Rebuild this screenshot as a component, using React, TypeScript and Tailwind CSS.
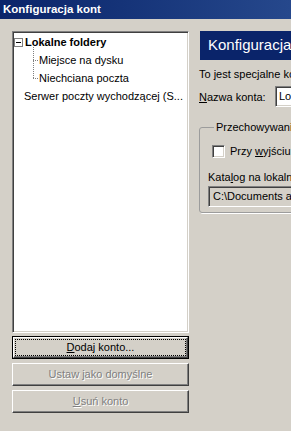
import React from "react";

const sunken =
  "border border-t-[#808080] border-l-[#808080] border-r-white border-b-white shadow-[inset_1px_1px_0_#404040,inset_-1px_-1px_0_#d4d0c8]";
const raised =
  "border border-t-white border-l-white border-r-[#404040] border-b-[#404040] shadow-[inset_-1px_-1px_0_#808080]";

function Connector({ last }: { last?: boolean }) {
  return (
    <svg width="7" height="18" className="overflow-visible shrink-0" viewBox="0 0 7 18">
      <line
        x1="1.5"
        y1={last ? -18 : -4}
        x2="1.5"
        y2={last ? 9 : 18}
        stroke="#808080"
        strokeWidth="1"
        strokeDasharray="1 1"
      />
      <line x1="1" y1="9.5" x2="7" y2="9.5" stroke="#808080" strokeWidth="1" strokeDasharray="1 1" />
    </svg>
  );
}

export default function App() {
  return (
    <div className="w-[291px] h-[431px] overflow-hidden bg-[#d4d0c8] font-['Liberation_Sans',Arial,sans-serif] text-[11px] text-black flex flex-col">
      <div className="h-[19px] shrink-0 bg-gradient-to-r from-[#0a246a] to-[#26488c] flex items-center pl-[3px] text-white font-bold text-[11.5px] leading-none whitespace-nowrap">
        Konfiguracja kont
      </div>
      <div className="flex pt-[12px] pl-[12px] gap-[10px]">
        <div className="w-[177px] shrink-0 flex flex-col">
          <div className={`h-[302px] bg-white ${sunken} pt-[1px]`}>
            <div className="h-[18px] flex items-center pl-[1px] whitespace-nowrap">
              <div className="w-[9px] h-[9px] border border-[#808080] bg-white flex items-center justify-center shrink-0">
                <div className="w-[5px] h-[1px] bg-black" />
              </div>
              <span className="ml-[2px] font-bold">Lokalne foldery</span>
            </div>
            <div className="h-[18px] flex items-center pl-[19px] whitespace-nowrap">
              <Connector />
              <span className="ml-[0px]">Miejsce na dysku</span>
            </div>
            <div className="h-[18px] flex items-center pl-[19px] whitespace-nowrap">
              <Connector last />
              <span className="ml-[0px]">Niechciana poczta</span>
            </div>
            <div className="h-[18px] flex items-center pl-[11px] whitespace-nowrap">
              <span>Serwer poczty wychodzącej (S...</span>
            </div>
          </div>
          <div className="mt-[3px] flex flex-col gap-[4px]">
            <div className="h-[23px] border border-black">
              <div className={`h-full ${raised} p-[1px]`}>
                <div className="h-full border border-dotted border-black flex items-center justify-center">
                  <span>
                    <span className="underline">D</span>odaj konto...
                  </span>
                </div>
              </div>
            </div>
            <div className={`h-[23px] ${raised} flex items-center justify-center text-[#808080] [text-shadow:1px_1px_0_#ffffff]`}>
              <span>
                Ustaw <span className="underline">j</span>ako domyślne
              </span>
            </div>
            <div className={`h-[23px] ${raised} flex items-center justify-center text-[#808080] [text-shadow:1px_1px_0_#ffffff]`}>
              <span>
                <span className="underline">U</span>suń konto
              </span>
            </div>
          </div>
        </div>
        <div className="w-[320px] shrink-0 flex flex-col whitespace-nowrap">
          <div className="ml-[1px] h-[29px] bg-[#0a246a] flex items-center pl-[8px] text-white text-[15px]">
            Konfiguracja konta
          </div>
          <div className="mt-[7px] h-[14px] leading-[14px]">To jest specjalne konto. Nie ma z nim powiązanej tożsamości.</div>
          <div className="mt-[5px] h-[21px] flex items-center">
            <span className="w-[76px] pt-[2px]">
              <span className="underline">N</span>azwa konta:
            </span>
            <div className={`h-[21px] flex-1 bg-white ${sunken} flex items-center pl-[3px]`}>Lokalne foldery</div>
          </div>
          <fieldset className="mt-[13px] w-[200px] border border-[#9c9c9c] rounded-[3px] pl-[8px] pb-[5px] shadow-[1px_1px_0_#ffffff]">
            <legend className="ml-[6px] px-[2px] leading-[14px]">Przechowywanie wiadomości</legend>
            <div className="mt-[11px] ml-[4px] h-[13px] flex items-center">
              <div className={`w-[13px] h-[13px] bg-white ${sunken}`} />
              <span className="ml-[5px]">
                Przy <span className="underline">w</span>yjściu opróżnij kosz
              </span>
            </div>
            <div className="mt-[12px] h-[14px] leading-[14px]">
              Kata<span className="underline">l</span>og na lokalnym dysku:
            </div>
            <div className={`mt-[2px] h-[21px] bg-[#d4d0c8] ${sunken} flex items-center pl-[4px]`}>
              C:\Documents and Settings\Użytkownik
            </div>
          </fieldset>
        </div>
      </div>
    </div>
  );
}
